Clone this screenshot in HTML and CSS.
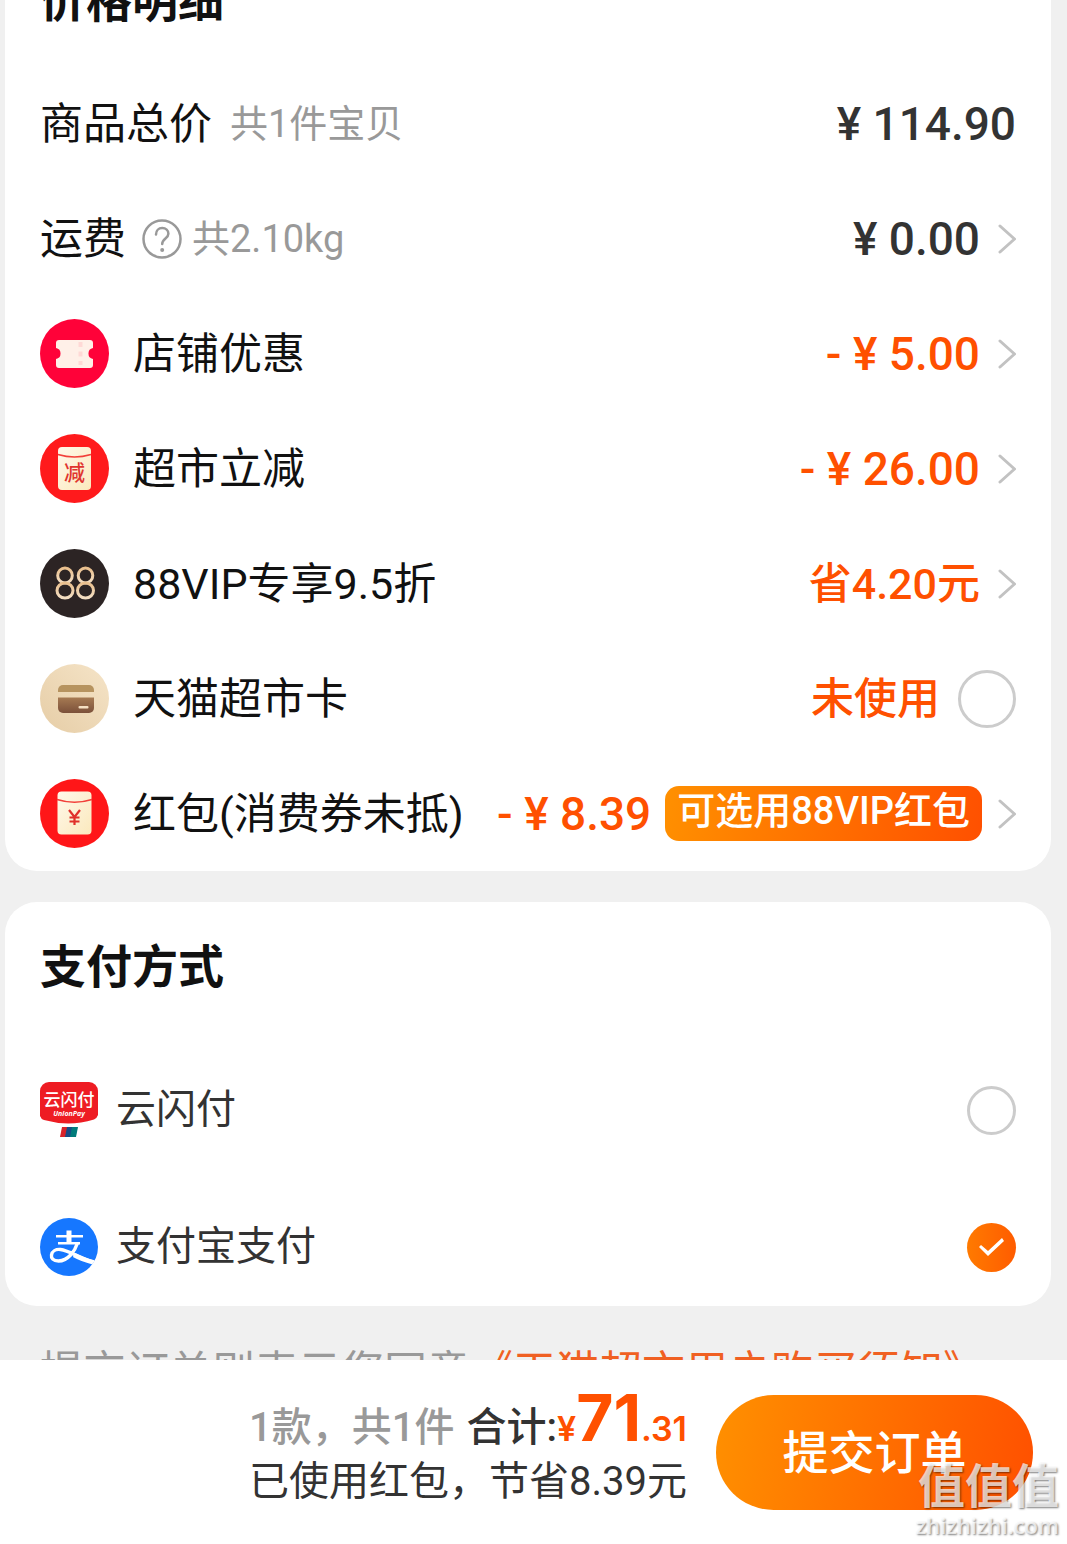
FILE: index.html
```html
<!DOCTYPE html>
<html lang="zh-CN">
<head>
<meta charset="utf-8">
<meta name="viewport" content="width=device-width, initial-scale=1">
<title>确认订单</title>
<link rel="stylesheet" href="styles.css">
</head>
<body>
<svg class="defs" aria-hidden="true">
  <defs>
    <linearGradient id="cream" x1="0" y1="0" x2="1" y2="1"><stop offset="0" stop-color="#fff8ea"/><stop offset="1" stop-color="#fbe9bd"/></linearGradient>
    <linearGradient id="sand" x1="1" y1="0" x2="0" y2="1"><stop offset="0" stop-color="#f5e4c8"/><stop offset="1" stop-color="#e6cda6"/></linearGradient>
    <linearGradient id="brown" x1="0" y1="0" x2="0" y2="1"><stop offset="0" stop-color="#a67a52"/><stop offset="1" stop-color="#7b503a"/></linearGradient>
    <linearGradient id="gold" x1="0" y1="0" x2="0" y2="1"><stop offset="0" stop-color="#e9bf8d"/><stop offset="1" stop-color="#f4dfc4"/></linearGradient>
    <symbol id="chevron" viewBox="0 0 18 30"><path d="M2 2 L16.500 15 L2 28" fill="none" stroke="#c2c2c2" stroke-width="3" stroke-linecap="round" stroke-linejoin="round"/></symbol>
  </defs>
</svg>
<div class="app">
  <main class="content">
    <section class="card card-prices">
      <h2 class="card-title">价格明细</h2>
      <ul class="price-list">
        <li class="price-row">
          <span class="label">商品总价</span>
          <span class="note">共1件宝贝</span>
          <span class="value"><span class="money">¥ 114.90</span></span>
        </li>
        <li class="price-row">
          <span class="label">运费</span>
          <button class="help" type="button" aria-label="运费说明">
            <svg width="40" height="40" viewBox="0 0 40 40" fill="none" stroke="#999" stroke-width="2.500" stroke-linecap="round"><circle cx="20" cy="20" r="18.500"/><path d="M14 15.500c0-4 2.600-6.500 6.200-6.500s6.200 2.400 6.200 5.800c0 4.700-6.200 4.800-6.200 10.200"/><circle cx="20.200" cy="31" r="1" fill="#999" stroke-width="2"/></svg>
          </button>
          <span class="note note-tight">共2.10kg</span>
          <button class="value" type="button"><span class="money">¥ 0.00</span><svg class="chevron"><use href="#chevron"/></svg></button>
        </li>
        <li class="price-row">
          <svg class="row-icon" viewBox="0 0 69 69"><circle cx="34.500" cy="34.500" r="34.500" fill="#ff0239"/><path d="M19 21h31a3 3 0 0 1 3 3v5a5.600 5.600 0 0 0 0 11v6a3 3 0 0 1-3 3H19a3 3 0 0 1-3-3v-6a5.600 5.600 0 0 0 0-11v-5a3 3 0 0 1 3-3z" fill="#fff0e8"/><path d="M40.500 23v23" stroke="#ffd9d6" stroke-width="4" stroke-dasharray="5 4.500"/></svg>
          <span class="label">店铺优惠</span>
          <button class="value saving" type="button"><span class="money">- ¥ 5.00</span><svg class="chevron"><use href="#chevron"/></svg></button>
        </li>
        <li class="price-row">
          <svg class="row-icon" viewBox="0 0 69 69"><circle cx="34.500" cy="34.500" r="34.500" fill="#ff1a1c"/><rect x="18" y="13" width="33" height="43" rx="4" fill="url(#cream)"/><path d="M18 20.500q16.500 5 33 0" fill="none" stroke="#f2403a" stroke-width="1.500"/><text x="34.500" y="45.500" text-anchor="middle" class="icon-text" font-size="21" fill="#e0352f">减</text></svg>
          <span class="label">超市立减</span>
          <button class="value saving" type="button"><span class="money">- ¥ 26.00</span><svg class="chevron"><use href="#chevron"/></svg></button>
        </li>
        <li class="price-row">
          <svg class="row-icon" viewBox="0 0 69 69"><circle cx="34.500" cy="34.500" r="34.500" fill="#2c2424"/><g fill="none" stroke="url(#gold)" stroke-width="3"><ellipse cx="25" cy="26.500" rx="7.300" ry="7.400"/><ellipse cx="25" cy="41.500" rx="8" ry="7.600"/><ellipse cx="45.500" cy="26.500" rx="7.300" ry="7.400"/><ellipse cx="45.500" cy="41.500" rx="8" ry="7.600"/></g></svg>
          <span class="label">88VIP专享9.5折</span>
          <button class="value saving mixed" type="button"><span class="money">省4.20元</span><svg class="chevron"><use href="#chevron"/></svg></button>
        </li>
        <li class="price-row">
          <svg class="row-icon" viewBox="0 0 69 69"><circle cx="34.500" cy="34.500" r="34.500" fill="url(#sand)"/><path d="M18 28v-2a5 5 0 0 1 5-5h26a5 5 0 0 1 5 5v2z" fill="#b6935f"/><path d="M18 33.500h36V44a5 5 0 0 1-5 5H23a5 5 0 0 1-5-5z" fill="url(#brown)"/><rect x="38.500" y="42" width="10" height="2.500" rx="1" fill="#f5dfc2"/></svg>
          <label class="label" for="market-card">天猫超市卡</label>
          <span class="value saving mixed"><span class="money">未使用</span><input class="tick tick-large" type="checkbox" id="market-card"></span>
        </li>
        <li class="price-row">
          <svg class="row-icon" viewBox="0 0 69 69"><circle cx="34.500" cy="34.500" r="34.500" fill="#ff1618"/><rect x="17.500" y="12.500" width="34" height="43" rx="4" fill="url(#cream)"/><path d="M17 20.500q17.500 5.500 35 0" fill="none" stroke="#f2403a" stroke-width="1.500"/><path d="M29 31l5.500 7 5.500-7M34.500 38v8M29.500 38.500h10M29.500 42.500h10" fill="none" stroke="#e0302a" stroke-width="2.200"/></svg>
          <span class="label">红包(消费券未抵)</span>
          <button class="value saving" type="button"><span class="money">- ¥ 8.39</span><span class="badge">可选用88VIP红包</span><svg class="chevron"><use href="#chevron"/></svg></button>
        </li>
      </ul>
    </section>

    <section class="card">
      <h2 class="card-title">支付方式</h2>
      <div class="pay-list">
        <div class="pay-row">
          <svg class="pay-icon" viewBox="0 0 58 58"><path d="M9 1h40a9 9 0 0 1 9 9v24q-1 3-4 4.500Q29 46 4 39Q1 38 0 35V10a9 9 0 0 1 9-9z" fill="#ee1c23"/><text x="29" y="24.500" text-anchor="middle" class="icon-text" font-size="17" fill="#fff">云闪付</text><text x="29" y="35" text-anchor="middle" class="icon-latin" font-size="7" fill="#fff">UnionPay</text><path d="M22 46h7l-2 10h-7z" fill="#d8232a"/><path d="M27 46h7l-2 10h-7z" fill="#174b85"/><path d="M32 46h6l-2 10h-6z" fill="#007b7a"/></svg>
          <label class="pay-label" for="pay-union">云闪付</label>
          <input class="tick" type="radio" name="pay" id="pay-union">
        </div>
        <div class="pay-row">
          <svg class="pay-icon" viewBox="0 0 58 58"><defs><clipPath id="disc"><circle cx="29" cy="29" r="29"/></clipPath></defs><circle cx="29" cy="29" r="29" fill="#1677ff"/><g clip-path="url(#disc)" fill="none" stroke="#fff"><path d="M29 12.500v12" stroke-width="5"/><path d="M16 18.300h27M18 25.200h22" stroke-width="2.600"/><path d="M37.500 25C35 33 28 43 18.500 43c-5.500 0-7.500-3-7-6 .6-3.800 4.500-6 9-5.500 8.500 1 17 7.500 34 13" stroke-width="3.400"/><path d="M34 37q8 4.500 20 7.500" stroke-width="4.500"/></g></svg>
          <label class="pay-label" for="pay-ali">支付宝支付</label>
          <input class="tick" type="radio" name="pay" id="pay-ali" checked>
        </div>
      </div>
    </section>

    <p class="agreement">提交订单则表示您同意<a href="#terms">《天猫超市用户购买须知》</a></p>
  </main>

  <footer class="checkout">
    <div class="summary">
      <p class="total"><span class="count">1款，共1件</span>合计:<span class="amount">¥<b>71</b>.31</span></p>
      <p class="saved">已使用红包，节省8.39元</p>
    </div>
    <button class="submit" type="button">提交订单</button>
    <div class="watermark"><span class="watermark-name">值值值</span><span class="watermark-site">zhizhizhi.com</span></div>
  </footer>
</div>
</body>
</html>
```

FILE: styles.css
```css
* {
  box-sizing: border-box;
}

body {
  margin: 0;
  background: #f0f0f0;
  color: #111;
  font-family: Roboto, "Noto Sans CJK SC", sans-serif;
}

h2,
p,
ul {
  margin: 0;
  padding: 0;
}

ul {
  list-style: none;
}

button {
  margin: 0;
  padding: 0;
  border: 0;
  background: none;
  color: inherit;
  font: inherit;
  cursor: pointer;
}

svg {
  display: block;
  flex: none;
}

.defs {
  position: absolute;
  width: 0;
  height: 0;
}

.app {
  display: flex;
  flex-direction: column;
  height: 100vh;
}

.content {
  flex: 1;
  min-height: 0;
  overflow: hidden;
  padding: 0 16px 0 5px;
}

/* Cards */
.card {
  margin-bottom: 31px;
  padding: 0 35px;
  border-radius: 32px;
  background: #fff;
}

/* The list is scrolled so that its heading is partly out of view */
.card-prices {
  margin-top: -64px;
}

.card-title {
  font-size: 46px;
  font-weight: 700;
  line-height: 130px;
}

.price-row {
  display: flex;
  align-items: center;
  height: 115px;
  white-space: nowrap;
}

.row-icon {
  width: 69px;
  height: 69px;
  margin-right: 24px;
}

.label {
  font-size: 43px;
  line-height: 60px;
}

.note {
  margin-left: 18px;
  color: #999;
  font-size: 38px;
  line-height: 60px;
}

.note-tight {
  margin-left: 10px;
}

.help {
  margin-left: 16px;
}

.value {
  display: flex;
  align-items: center;
  margin-left: auto;
  color: #333;
  font-size: 46px;
  font-weight: 500;
  line-height: 60px;
}

.saving {
  color: #ff5000;
}

.mixed {
  font-size: 43px;
}

.chevron {
  width: 18px;
  height: 30px;
  margin-left: 18px;
}

.badge {
  height: 55px;
  margin-left: 14px;
  padding: 0 12px;
  border-radius: 14px;
  background: linear-gradient(100deg, #ff9000, #ff5000);
  color: #fff;
  font-size: 38px;
  font-weight: 500;
  line-height: 50px;
}

.badge + .chevron {
  margin-left: 16px;
}

/* Round tick boxes and radios */
.tick {
  appearance: none;
  flex: none;
  width: 49px;
  height: 49px;
  margin: 0 0 0 auto;
  border: 3px solid #ccc;
  border-radius: 50%;
  background: #fff;
}

.tick-large {
  width: 58px;
  height: 58px;
  margin-left: 18px;
}

.tick:checked {
  display: grid;
  place-items: center;
  border: 0;
  background: linear-gradient(90deg, #ff7a00, #ff5c00);
}

.tick:checked::before {
  content: "";
  width: 25px;
  height: 18px;
  background: #fff;
  clip-path: polygon(0 9px, 2px 7px, 9px 13px, 23px 0, 25px 3px, 9px 18px);
}

/* Payment methods */
.pay-list {
  display: flex;
  flex-direction: column;
  gap: 79px;
  padding: 49px 0 30px;
}

.pay-row {
  display: flex;
  align-items: center;
  height: 58px;
}

.pay-icon {
  width: 58px;
  height: 58px;
  margin-right: 18px;
}

.pay-label {
  color: #333;
  font-size: 40px;
  line-height: 58px;
}

.icon-text {
  font-weight: 500;
}

.icon-latin {
  font-family: "Open Sans", sans-serif;
  font-style: italic;
  font-weight: 700;
}

.agreement {
  padding-left: 35px;
  color: #999;
  font-size: 43px;
  line-height: 70px;
  white-space: nowrap;
}

.agreement a {
  color: #f06022;
  text-decoration: none;
}

/* Checkout bar */
.checkout {
  position: relative;
  display: flex;
  flex: none;
  align-items: center;
  justify-content: flex-end;
  gap: 29px;
  padding: 35px 34px 34px;
  background: #fff;
  color: #333;
  font-size: 40px;
  line-height: 54px;
  white-space: nowrap;
}

.summary {
  padding-top: 4px;
  text-align: right;
}

.total {
  font-weight: 500;
}

.count {
  margin-right: 12px;
  color: #999;
}

.amount {
  color: #ff5000;
  font-family: Inter, sans-serif;
  font-size: 34px;
  font-weight: 600;
  line-height: 0;
}

.amount b {
  font-size: 64px;
  font-weight: 700;
}

.submit {
  width: 317px;
  height: 115px;
  border-radius: 58px;
  background: linear-gradient(100deg, #ff9000, #ff5000);
  color: #fff;
  font-size: 46px;
  font-weight: 500;
}

.watermark {
  position: absolute;
  right: 8px;
  bottom: 6px;
  display: flex;
  flex-direction: column;
  align-items: flex-end;
  color: rgba(255, 255, 255, 0.72);
  text-shadow: 1px 1px 2px rgba(0, 0, 0, 0.5);
  pointer-events: none;
}

.watermark-name {
  font-size: 47px;
  font-weight: 700;
  line-height: 50px;
}

.watermark-site {
  font-family: "Open Sans", sans-serif;
  font-size: 22px;
  font-weight: 600;
  line-height: 26px;
}
```
